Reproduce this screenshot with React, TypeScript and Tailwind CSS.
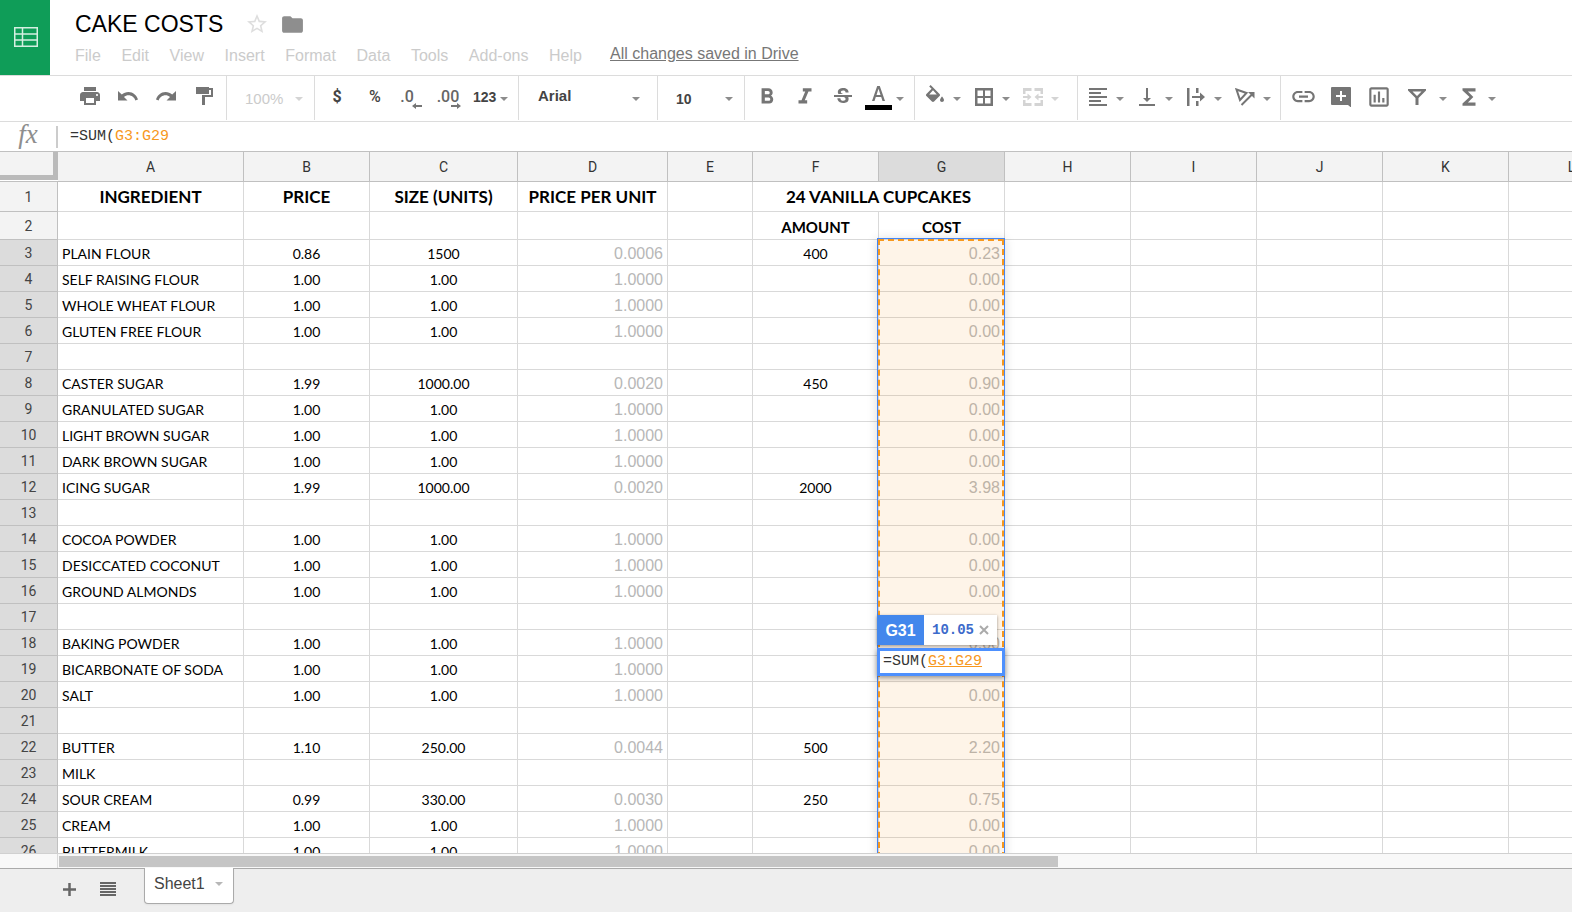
import type { ReactNode } from 'react';
import { MdFolder, MdStarBorder, MdPrint, MdFormatBold, MdFormatItalic, MdStrikethroughS, MdFormatAlignLeft, MdVerticalAlignBottom, MdLink, MdOutlineInsertChart, MdFunctions } from 'react-icons/md';

type Item = { name: string; price?: string; size?: string; unit?: string; amount?: string; cost?: string };

const menus = ['File', 'Edit', 'View', 'Insert', 'Format', 'Data', 'Tools', 'Add-ons', 'Help'];

const columns = [
    { id: 'A', width: 'w-[186px]' },
    { id: 'B', width: 'w-[126px]' },
    { id: 'C', width: 'w-[148px]' },
    { id: 'D', width: 'w-[150px]' },
    { id: 'E', width: 'w-[85px]' },
    { id: 'F', width: 'w-[126px]' },
    { id: 'G', width: 'w-[126px]' },
    { id: 'H', width: 'w-[126px]' },
    { id: 'I', width: 'w-[126px]' },
    { id: 'J', width: 'w-[126px]' },
    { id: 'K', width: 'w-[126px]' },
    { id: 'L', width: 'w-[126px]' },
];

const blank: Item = { name: '' };
const unpriced = (name: string): Item => ({ name, price: '1.00', size: '1.00', unit: '1.0000', cost: '0.00' });

// first entry is sheet row 3
const items: Item[] = [
    { name: 'PLAIN FLOUR', price: '0.86', size: '1500', unit: '0.0006', amount: '400', cost: '0.23' },
    unpriced('SELF RAISING FLOUR'),
    unpriced('WHOLE WHEAT FLOUR'),
    unpriced('GLUTEN FREE FLOUR'),
    blank,
    { name: 'CASTER SUGAR', price: '1.99', size: '1000.00', unit: '0.0020', amount: '450', cost: '0.90' },
    unpriced('GRANULATED SUGAR'),
    unpriced('LIGHT BROWN SUGAR'),
    unpriced('DARK BROWN SUGAR'),
    { name: 'ICING SUGAR', price: '1.99', size: '1000.00', unit: '0.0020', amount: '2000', cost: '3.98' },
    blank,
    unpriced('COCOA POWDER'),
    unpriced('DESICCATED COCONUT'),
    unpriced('GROUND ALMONDS'),
    blank,
    unpriced('BAKING POWDER'),
    { name: 'BICARBONATE OF SODA', price: '1.00', size: '1.00', unit: '1.0000' },
    unpriced('SALT'),
    blank,
    { name: 'BUTTER', price: '1.10', size: '250.00', unit: '0.0044', amount: '500', cost: '2.20' },
    { name: 'MILK' },
    { name: 'SOUR CREAM', price: '0.99', size: '330.00', unit: '0.0030', amount: '250', cost: '0.75' },
    unpriced('CREAM'),
    unpriced('BUTTERMILK'),
];

const Caret = ({ className = '' }: { className?: string }) => (
    <svg viewBox="0 0 8 4" className={`h-1 w-2 shrink-0 fill-current ${className}`} aria-hidden="true">
        <path d="M0 0h8L4 4z" />
    </svg>
);

const Tool = ({ label, children }: { label: string; children: ReactNode }) => (
    <button type="button" aria-label={label} className="flex h-8 w-[38px] shrink-0 items-center justify-center">
        {children}
    </button>
);

const DropTool = ({ label, disabled, children }: { label: string; disabled?: boolean; children: ReactNode }) => (
    <button type="button" aria-label={label} disabled={disabled} className={`flex h-8 w-[49px] shrink-0 items-center ${disabled ? 'text-[#d4d4d4]' : ''}`}>
        <span className="flex w-8 justify-center">{children}</span>
        <span className="flex w-3 justify-center pt-1"><Caret className={disabled ? '' : 'text-[#8c8c8c]'} /></span>
    </button>
);

const Group = ({ className, children }: { className: string; children: ReactNode }) => (
    <div className={`flex h-[44px] shrink-0 items-center border-r border-[#dcdcdc] ${className}`}>{children}</div>
);

const Header = () => (
    <header className="flex h-[75px] shrink-0">
        <a href="#" aria-label="Sheets home" className="flex w-[50px] items-center justify-center bg-[#0f9d58] pb-[2px] pl-px">
            <svg viewBox="0 0 24 20" className="h-5 w-6" fill="none" stroke="#d5efe1" strokeWidth="1.5">
                <path d="M.75.75h22.5v18.5H.75zM8.5.75v18.5M.75 7h22.5M.75 13h22.5" />
            </svg>
        </a>
        <div className="flex flex-col pl-[25px]">
            <div className="flex h-11 items-center pt-1">
                <h1 className="text-[23px] leading-7 text-black">CAKE COSTS</h1>
                <button type="button" aria-label="Star" className="ml-[22px] text-[#dedede]"><MdStarBorder size={24} /></button>
                <button type="button" aria-label="Move to folder" className="ml-[11px] text-[#8e8e8e]"><MdFolder size={25} /></button>
            </div>
            <div className="flex h-6 items-center text-base">
                <nav className="flex w-[507px] justify-between text-[#cbcbcb]">
                    {menus.map((menu) => (
                        <button key={menu} type="button">{menu}</button>
                    ))}
                </nav>
                <a href="#" className="ml-7 pb-1 text-[#777] underline">All changes saved in Drive</a>
            </div>
        </div>
    </header>
);

const Toolbar = () => (
    <div role="toolbar" aria-label="Formatting" className="flex h-[47px] shrink-0 items-start overflow-hidden border-y border-[#dcdcdc] text-[#757575]">
        <Group className="w-[227px] pb-1 pl-[71px]">
            <Tool label="Print"><MdPrint size={24} /></Tool>
            <Tool label="Undo">
                <svg viewBox="0 0 20 10" className="h-[10px] w-5 fill-current">
                    <path d="M10.500 1C7.900 1 5.600 2 3.800 3.500L0 0v9.500h9.500L6 6c1.300-1.100 2.800-1.700 4.500-1.700 3.200 0 5.900 2.200 6.800 5.200l2.700-.9C18.700 4.200 15 1 10.500 1z" />
                </svg>
            </Tool>
            <Tool label="Redo">
                <svg viewBox="0 0 20 10" className="h-[10px] w-5 fill-current">
                    <path d="M9.500 1c2.600 0 4.900 1 6.700 2.500L20 0v9.500h-9.500L14 6c-1.300-1.100-2.800-1.700-4.500-1.700-3.200 0-5.900 2.200-6.800 5.200L0 8.600C1.300 4.200 5 1 9.500 1z" />
                </svg>
            </Tool>
            <Tool label="Paint format">
                <svg viewBox="0 0 17 18" className="h-[18px] w-[17px] fill-current">
                    <path d="M0 0h13v1h4v9H9v8H6V8h9V3h-2v4H0z" />
                </svg>
            </Tool>
        </Group>
        <Group className="w-[88px] pt-[2px] pl-[18px]">
            <select aria-label="Zoom" disabled className="w-[50px] appearance-none text-[15px] text-[#cbcbcb]"><option>100%</option></select>
            <Caret className="text-[#d4d4d4]" />
        </Group>
        <Group className="w-[204px] pb-[3px] pl-[3px] font-['Roboto',sans-serif] text-[#444]">
            <Tool label="Format as currency"><span className="text-base font-bold">$</span></Tool>
            <Tool label="Format as percent"><span className="text-base font-medium">%</span></Tool>
            <Tool label="Decrease decimal places">
                <span className="relative mr-3 text-base font-medium text-[#666]">.0
                    <svg viewBox="0 0 10 6" className="absolute -right-2 bottom-0 h-[6px] w-[10px] fill-[#757575]"><path d="M0 3l4-3v2h6v2H4v2z" /></svg>
                </span>
            </Tool>
            <Tool label="Increase decimal places">
                <span className="relative mr-[6px] text-base font-medium text-[#666]">.00
                    <svg viewBox="0 0 10 6" className="absolute -right-[2px] bottom-0 h-[6px] w-[10px] fill-[#757575]"><path d="M10 3L6 0v2H0v2h6v2z" /></svg>
                </span>
            </Tool>
            <button type="button" className="ml-[3px] flex items-center gap-1 font-['Liberation_Sans',Arial,sans-serif] text-sm font-bold">
                123
                <Caret className="mt-1 text-[#8c8c8c]" />
            </button>
        </Group>
        <Group className="w-[139px] pb-[3px] pl-[19px]">
            <select aria-label="Font" className="w-[94px] appearance-none text-[15px] font-bold text-[#444]"><option>Arial</option></select>
            <Caret className="mt-1 text-[#8c8c8c]" />
        </Group>
        <Group className="w-[87px] pt-[2px] pl-[18px]">
            <select aria-label="Font size" className="w-[49px] appearance-none text-sm font-bold text-[#444]"><option>10</option></select>
            <Caret className="text-[#8c8c8c]" />
        </Group>
        <Group className="w-[170px] pb-[3px] pl-[3px]">
            <Tool label="Bold"><MdFormatBold size={26} /></Tool>
            <Tool label="Italic"><MdFormatItalic size={26} /></Tool>
            <Tool label="Strikethrough"><MdStrikethroughS size={24} /></Tool>
            <button type="button" aria-label="Text color" className="flex items-center gap-1">
                <svg viewBox="0 0 27 26" className="mt-[2px] ml-[3px] h-[26px] w-[27px]">
                    <path d="M12.200 1h2.600L20 16h-2.500l-1.300-4h-5.400l-1.300 4H7zM11.500 10h4l-2-6.200z" fill="#757575" />
                    <path d="M0 20h27v5H0z" fill="#000" />
                </svg>
                <Caret className="mt-1 text-[#8c8c8c]" />
            </button>
        </Group>
        <Group className="w-[163px] pb-[3px] pl-1">
            <DropTool label="Fill color">
                <svg viewBox="0 0 24 24" className="size-6 fill-current">
                    <path d="M16.560 8.940L7.620 0 6.210 1.410l2.380 2.380-5.150 5.150c-.59.59-.59 1.540 0 2.120l5.500 5.500c.29.29.68.44 1.060.44s.77-.15 1.060-.44l5.500-5.500c.59-.58.59-1.530 0-2.120zM6.210 9.500L10 5.210 13.790 9.500zM19 11.500s-2 2.170-2 3.500c0 1.100.9 2 2 2s2-.9 2-2c0-1.330-2-3.500-2-3.500z" />
                </svg>
            </DropTool>
            <DropTool label="Borders">
                <svg viewBox="0 0 18 18" className="size-[18px] fill-current">
                    <path fillRule="evenodd" d="M0 0h18v18H0zM2.500 2.500V8H8V2.500zM10 2.500V8h5.500V2.500zM2.500 10v5.500H8V10zM10 10v5.500h5.500V10z" />
                </svg>
            </DropTool>
            <DropTool label="Merge cells" disabled>
                <svg viewBox="0 0 20 18" className="h-[18px] w-5 fill-current">
                    <path d="M0 0h8.500v3H2.500v3H0zM11.500 0H20v6h-2.500V3h-6zM0 12h2.500v3h6v3H0zM17.500 12H20v6h-8.500v-3h6zM0 8h4.500V5.500L8.500 9l-4 3.500V10H0zM20 8h-4.500V5.500L11.500 9l4 3.500V10H20z" />
                </svg>
            </DropTool>
        </Group>
        <Group className="w-[203px] pb-[3px] pl-1">
            <DropTool label="Horizontal align"><MdFormatAlignLeft size={24} /></DropTool>
            <DropTool label="Vertical align"><MdVerticalAlignBottom size={24} /></DropTool>
            <DropTool label="Text wrapping">
                <svg viewBox="0 0 18 18" className="size-[18px] fill-current">
                    <path d="M0 0h2.500v18H0zM9 0h2.500v5H9zM9 13h2.500v5H9zM5 8h8V4.500L18 9l-5 4.500V10H5z" />
                </svg>
            </DropTool>
            <DropTool label="Text rotation">
                <svg viewBox="0 0 20 18" className="h-[18px] w-5" fill="none" stroke="currentColor" strokeWidth="2">
                    <path d="M1.500 1.500l10 3.500-6.500 7zM6.500 17L17 6.500" />
                    <path d="M13 4h6.500v6.500z" fill="currentColor" stroke="none" />
                </svg>
            </DropTool>
        </Group>
        <div className="flex h-[44px] items-center pb-[3px] pl-[3px]">
            <Tool label="Insert link"><MdLink size={27} /></Tool>
            <Tool label="Insert comment">
                <svg viewBox="0 0 20 20" className="size-5 fill-current">
                    <path fillRule="evenodd" d="M1 0h18a1 1 0 0 1 1 1v19.500L17 18H1a1 1 0 0 1-1-1V1a1 1 0 0 1 1-1zM9 4v4H5v2h4v4h2v-4h4V8h-4V4z" />
                </svg>
            </Tool>
            <Tool label="Insert chart"><MdOutlineInsertChart size={26} /></Tool>
            <Tool label="Filter">
                <svg viewBox="0 0 18 16" className="h-4 w-[18px] fill-current">
                    <path fillRule="evenodd" d="M0 0h18v1.500L10.500 9v7h-3V9L0 1.500zM4.500 2.500L9 7l4.500-4.500z" />
                </svg>
            </Tool>
            <span className="flex w-[14px] justify-center pt-1"><Caret className="text-[#8c8c8c]" /></span>
            <Tool label="Functions"><MdFunctions size={26} /></Tool>
            <Caret className="mt-1 text-[#8c8c8c]" />
        </div>
    </div>
);

const Formula = ({ label, underline }: { label: string; underline?: boolean }) => (
    <div role="textbox" aria-label={label} contentEditable suppressContentEditableWarning spellCheck={false} className="font-['Liberation_Mono',monospace] text-[15px] leading-5 whitespace-nowrap text-[#333] outline-none">
        =SUM(<span className={`text-[#f7981d] ${underline ? 'underline' : ''}`}>G3:G29</span>
    </div>
);

const cell = 'border-r border-b border-[#d9d9d9] px-1 py-0';
const lato = "font-['Lato',sans-serif]";

const RowHead = ({ n, active }: { n: number; active?: boolean }) => (
    <th scope="row" className={`border-r border-b border-[#c0c0c0] p-0 text-center align-middle font-['Roboto',sans-serif] text-sm leading-4 font-normal text-[#444] ${active ? 'bg-[#dcdcdc]' : 'bg-[#f3f3f3]'}`}>{n}</th>
);

const Blanks = ({ count }: { count: number }) => (
    <>
        {Array.from({ length: count }, (_, i) => <td key={i} className={cell}></td>)}
    </>
);

const Sheet = () => (
    <main className="relative min-h-0 flex-1 overflow-hidden border-b border-[#d0d0d0]">
        <table className="w-[1634px] table-fixed border-separate border-spacing-0">
            <colgroup>
                <col className="w-[58px]" />
                {columns.map((col) => <col key={col.id} className={col.width} />)}
            </colgroup>
            <thead>
                <tr className="h-[31px]">
                    <td className="border-t border-b border-[#c0c0c0] p-0">
                        <div className="mb-px h-7 border-r-[5px] border-b-[5px] border-[#bababa] bg-[#f3f3f3]"></div>
                    </td>
                    {columns.map((col) => (
                        <th key={col.id} scope="col" className={`border-t border-r border-b border-[#c0c0c0] p-0 font-['Roboto',sans-serif] text-sm leading-4 font-normal text-[#333] ${col.id === 'G' ? 'bg-[#dcdcdc]' : 'bg-[#f3f3f3]'}`}>{col.id}</th>
                    ))}
                </tr>
            </thead>
            <tbody>
                <tr className={`h-[30px] text-center text-[17px] leading-5 font-bold whitespace-nowrap ${lato}`}>
                    <RowHead n={1} />
                    <td className={cell}>INGREDIENT</td>
                    <td className={cell}>PRICE</td>
                    <td className={cell}>SIZE (UNITS)</td>
                    <td className={cell}>PRICE PER UNIT</td>
                    <td className={cell}></td>
                    <td colSpan={2} className={cell}>24 VANILLA CUPCAKES</td>
                    <Blanks count={5} />
                </tr>
                <tr className={`h-[28px] text-center align-bottom text-[15px] leading-6 font-bold ${lato}`}>
                    <RowHead n={2} />
                    <Blanks count={5} />
                    <td className={cell}>AMOUNT</td>
                    <td className={cell}>COST</td>
                    <Blanks count={5} />
                </tr>
                {items.map((item, i) => (
                    <tr key={i} className={`h-[26px] text-center align-bottom text-sm leading-[22px] whitespace-nowrap ${lato}`}>
                        <RowHead n={i + 3} active />
                        <td className={`${cell} text-left`}>{item.name}</td>
                        <td className={cell}>{item.price}</td>
                        <td className={cell}>{item.size}</td>
                        <td className={`${cell} text-right font-['Liberation_Sans',Arial,sans-serif] text-base leading-[22px] text-[#b7b7b7]`}>{item.unit}</td>
                        <td className={cell}></td>
                        <td className={cell}>{item.amount}</td>
                        <td className={`${cell} text-right font-['Liberation_Sans',Arial,sans-serif] text-base leading-[22px] text-[#b7b7b7]`}>{item.cost}</td>
                        <Blanks count={5} />
                    </tr>
                ))}
            </tbody>
        </table>

        {/* range picked by the formula, runs on past the last visible row */}
        <div className="pointer-events-none absolute top-[87px] -bottom-4 left-[877px] w-[128px] border border-[#4285f4] shadow-[0_1px_10px_rgba(0,0,0,0.15)]">
            <div className="h-full border-2 border-dashed border-[#f7981d] bg-[#f7981d]/10"></div>
        </div>

        <div className="absolute top-[464px] left-[877px] flex h-[30px] shadow-[0_1px_3px_rgba(0,0,0,0.4)]">
            <div className="flex w-[47px] items-center justify-center bg-[#4387ec] pt-[2px] text-base font-bold text-white">G31</div>
            <div className="flex w-[73px] items-center justify-center gap-[5px] bg-white">
                <output className="font-['Liberation_Mono',monospace] text-[14px] font-bold text-[#3c6acb]">10.05</output>
                <button type="button" aria-label="Close preview">
                    <svg viewBox="0 0 10 10" className="size-[10px]" stroke="#aaa" strokeWidth="2"><path d="M1 1l8 8M9 1l-8 8" /></svg>
                </button>
            </div>
        </div>
        <div className="absolute top-[497px] left-[877px] flex h-[28px] w-[128px] items-center border-[3px] border-[#4d90fe] bg-white pl-[3px] shadow-[0_2px_5px_rgba(0,0,0,0.4)]">
            <Formula label="Cell G31" underline />
        </div>
    </main>
);

const App = () => {
    return (
        <div className="flex h-screen flex-col overflow-hidden bg-white font-['Liberation_Sans',Arial,sans-serif]">
            <Header />
            <Toolbar />
            <div className="flex h-[29px] shrink-0 items-center">
                <div className="flex h-[22px] w-[58px] items-center justify-center border-r-2 border-[#ccc] pb-[5px] font-['Liberation_Serif',serif] text-[27px] leading-5 text-[#8e8e8e] italic">fx</div>
                <div className="flex-1 pl-3"><Formula label="Formula bar" /></div>
            </div>
            <Sheet />
            <div className="flex h-[14px] shrink-0 bg-[#f8f8f8]">
                <div className="w-[58px] border-r border-[#d9d9d9]"></div>
                <div className="flex-1 py-[2px] pl-px"><div className="h-[11px] w-[66%] bg-[#c5c5c5]"></div></div>
            </div>
            <footer className="flex h-[44px] shrink-0 items-start border-t border-[#aaa] bg-[#eee] pl-[57px] text-[#666]">
                <button type="button" aria-label="Add sheet" className="mt-2 flex h-6 w-6 items-center justify-center">
                    <svg viewBox="0 0 13 13" className="size-[13px] fill-current"><path d="M5.250 0h2.500v5.250H13v2.500H7.750V13h-2.500V7.750H0v-2.500h5.250z" /></svg>
                </button>
                <button type="button" aria-label="All sheets" className="mt-2 ml-[15px] flex h-6 w-6 items-center justify-center">
                    <svg viewBox="0 0 16 14" className="h-[14px] w-4 fill-current"><path d="M0 0h16v2H0zM0 3h16v2H0zM0 6h16v2H0zM0 9h16v2H0zM0 12h16v2H0z" /></svg>
                </button>
                <button type="button" className="-mt-px ml-6 flex h-9 w-[90px] items-center gap-[10px] rounded-b-sm border border-t-0 border-[#aaa] bg-white pb-1 pl-[9px] text-base text-[#444] shadow-xs">
                    Sheet1
                    <Caret className="text-[#b7b7b7]" />
                </button>
            </footer>
        </div>
    );
};

export default App;
